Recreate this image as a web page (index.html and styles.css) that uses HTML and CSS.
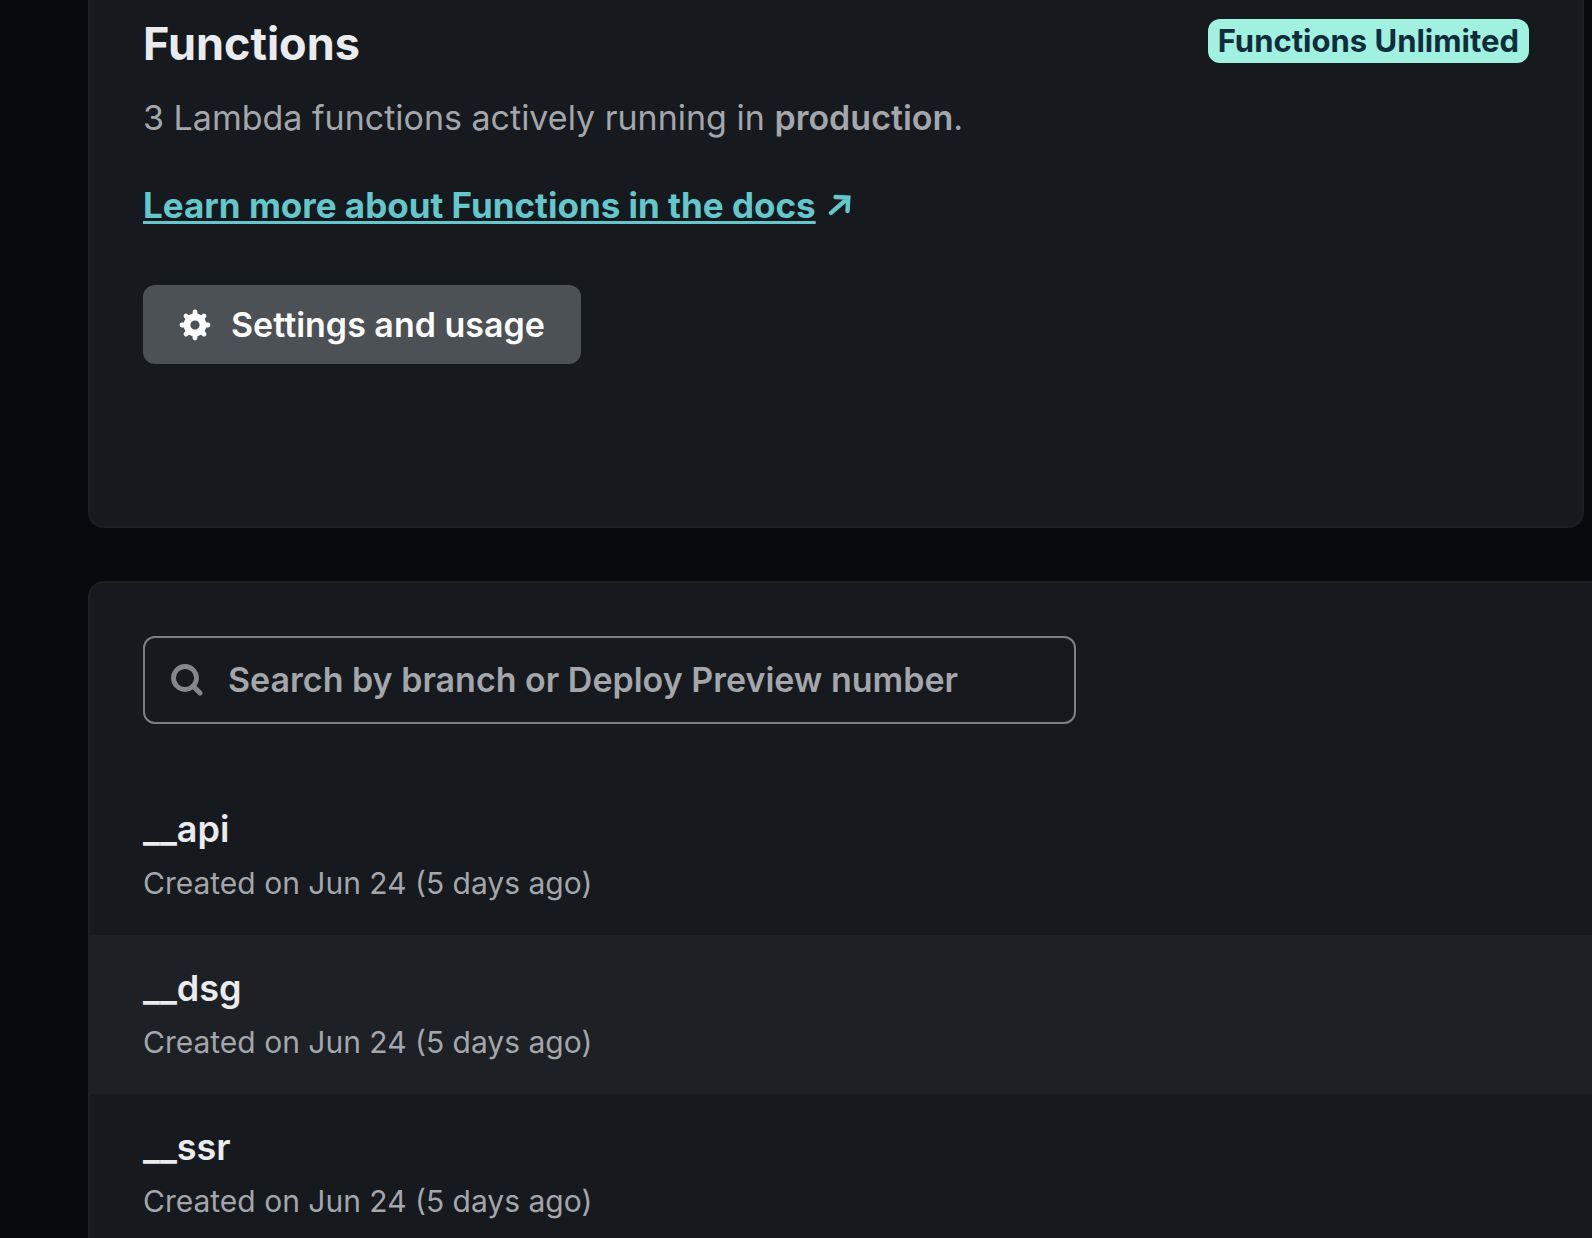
FILE: index.html
```html
<!DOCTYPE html>
<html lang="en">
<head>
<meta charset="utf-8">
<meta name="viewport" content="width=device-width, initial-scale=1">
<title>Functions</title>
<link rel="stylesheet" href="styles.css">
</head>
<body>
<main class="page">
  <section class="card overview">
    <div class="overview-main">
      <h1 class="title">Functions</h1>
      <p class="summary">3 Lambda functions actively running in <strong>production</strong>.</p>
      <p class="docs">
        <a class="docs-link" href="#docs"><span class="docs-text">Learn more about Functions in the docs</span>
          <svg class="docs-icon" viewBox="0 0 24 22" aria-hidden="true"><path d="M3 18.800L19 5M7.500 3L20.300 3.500L19.500 17" fill="none" stroke="currentColor" stroke-width="4.400" stroke-linecap="round"/></svg></a>
      </p>
      <button class="button" type="button">
        <svg class="button-icon" viewBox="0 0 32 32" aria-hidden="true">
          <g stroke="currentColor" stroke-width="4.800" stroke-linecap="round"><path d="M16 3V8M16 24V29M3 16H8M24 16H29M7 7L10 10M22 22L25 25M25 7L22 10M10 22L7 25"/></g>
          <circle cx="16" cy="16" r="8" fill="none" stroke="currentColor" stroke-width="6.800"/>
        </svg>
        Settings and usage
      </button>
    </div>
    <span class="badge">Functions Unlimited</span>
  </section>

  <section class="card listing">
    <form class="search" role="search">
      <svg class="search-icon" viewBox="0 0 32 32" aria-hidden="true"><circle cx="14" cy="14" r="11.500" fill="none" stroke="currentColor" stroke-width="4.800"/><path d="M22 22L29 29" stroke="currentColor" stroke-width="5" stroke-linecap="round"/></svg>
      <input class="search-input" type="text" aria-label="Search by branch or Deploy Preview number" placeholder="Search by branch or Deploy Preview number">
    </form>
    <ul class="functions">
      <li class="function"><h2 class="name">__api</h2><p class="created">Created on Jun 24 (5 days ago)</p></li>
      <li class="function function-active"><h2 class="name">__dsg</h2><p class="created">Created on Jun 24 (5 days ago)</p></li>
      <li class="function"><h2 class="name">__ssr</h2><p class="created">Created on Jun 24 (5 days ago)</p></li>
    </ul>
  </section>
</main>
</body>
</html>
```
FILE: styles.css
```css
* {
  box-sizing: border-box;
}

body {
  margin: 0;
  background: #060a0d;
  color: #e9ebed;
  font-family: Inter, "Liberation Sans", sans-serif;
  font-size: 34px;
  line-height: 56px;
}

h1,
h2,
p,
ul {
  margin: 0;
  padding: 0;
}

.page {
  display: flex;
  flex-direction: column;
  gap: 53px;
  padding-left: 88px;
}

.card {
  background: #16191d;
  border: 2px solid #1e2124;
}

.overview {
  display: flex;
  justify-content: space-between;
  align-items: flex-start;
  margin-right: 8px;
  padding: 14px 53px 162px;
  border-top: 0;
  border-radius: 0 0 16px 16px;
}

.title {
  margin-bottom: 16px;
  font-size: 45px;
  line-height: 60px;
  font-weight: 700;
}

.summary {
  margin-bottom: 31px;
  color: #a3a6aa;
}

.summary strong {
  font-weight: 600;
}

.docs {
  display: flex;
  margin-bottom: 52px;
}

.docs-link {
  display: flex;
  align-items: center;
  gap: 12px;
  color: #64c7cb;
  font-size: 35px;
  font-weight: 700;
  text-decoration: none;
}

.docs-text {
  text-decoration: underline;
  text-decoration-thickness: 3px;
  text-decoration-skip-ink: none;
  text-underline-offset: 3px;
}

.docs-icon {
  width: 24px;
  height: 22px;
}

.button {
  display: flex;
  align-items: center;
  gap: 20px;
  height: 79px;
  padding: 0 36px;
  border: 0;
  border-radius: 12px;
  background: #4c5155;
  color: #fff;
  font: inherit;
  font-weight: 600;
}

.button-icon {
  width: 32px;
  height: 32px;
}

.badge {
  margin-top: 5px;
  padding: 0 10px;
  border-radius: 12px;
  background: #a0f1df;
  color: #112d3b;
  font-size: 31px;
  line-height: 44px;
  font-weight: 700;
}

.listing {
  padding: 53px 0 0;
  border-right: 0;
  border-bottom: 0;
  border-radius: 16px 0 0 0;
}

.search {
  display: flex;
  align-items: center;
  gap: 25px;
  max-width: 933px;
  height: 88px;
  margin: 0 53px 52px;
  padding: 0 26px;
  border: 2px solid #7c8084;
  border-radius: 12px;
}

.search-icon {
  flex: none;
  width: 32px;
  height: 32px;
  color: #84888b;
}

.search-input {
  flex: 1;
  min-width: 0;
  padding: 0;
  border: 0;
  outline: 0;
  background: none;
  color: #e9ebed;
  font: inherit;
  font-weight: 600;
}

.search-input::placeholder {
  color: #a3a6aa;
  opacity: 1;
}

.functions {
  list-style: none;
}

.function {
  padding: 25px 53px 26px;
}

.function-active {
  background: #1d2024;
}

.name {
  font-size: 36px;
  line-height: 56px;
  font-weight: 600;
}

.created {
  color: #a3a6aa;
  font-size: 30px;
  line-height: 52px;
}
```
